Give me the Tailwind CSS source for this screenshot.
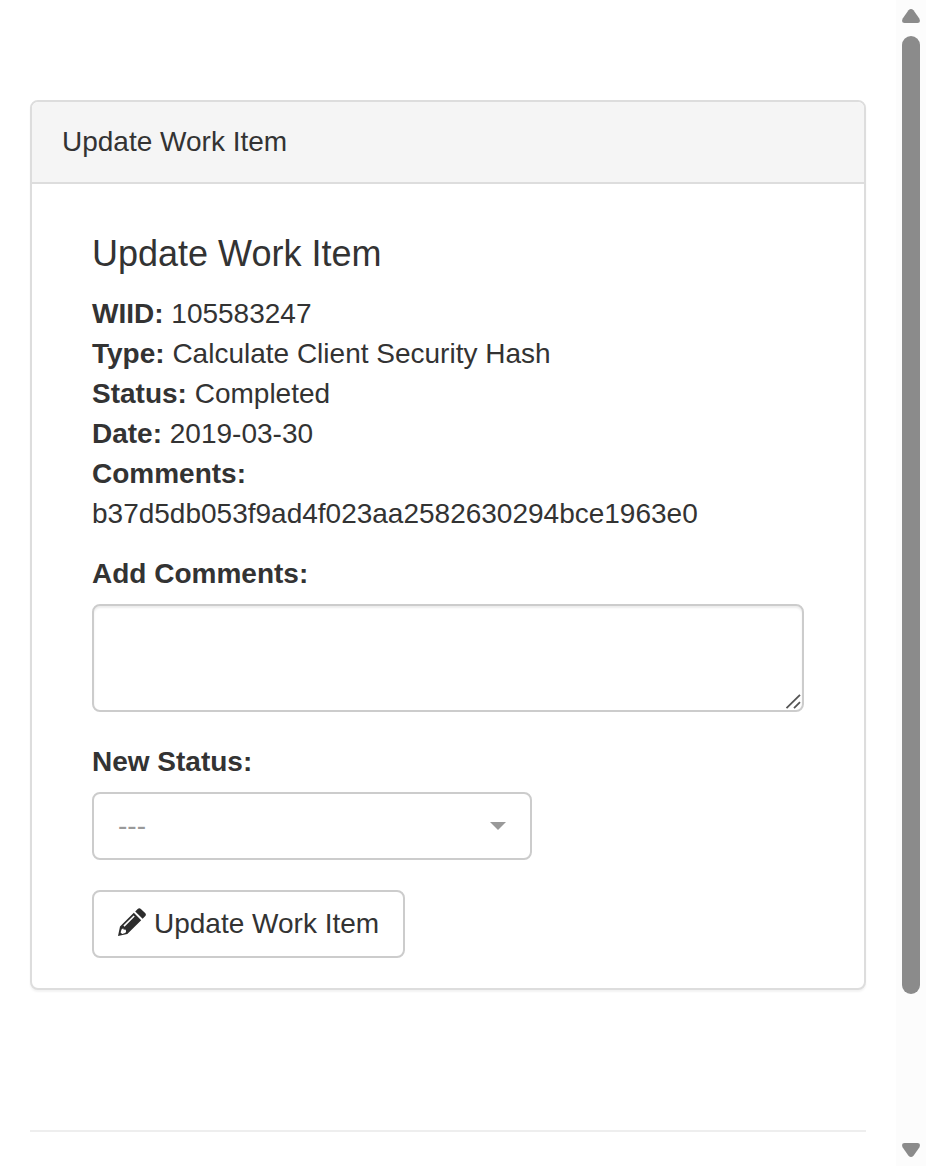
<!DOCTYPE html>
<html lang="en">
<head>
<meta charset="utf-8">
<title>Update Work Item</title>
<script src="https://cdn.jsdelivr.net/npm/@tailwindcss/browser@4"></script>
</head>
<body class="flex h-[1166px] w-[926px] overflow-hidden bg-white font-['Liberation_Sans',Arial,sans-serif] text-[28px] leading-10 text-[#333]">
  <main class="w-[896px] pl-[30px] pr-[30px] pt-[100px]">
    <section class="h-[890px] rounded-lg border-2 border-[#ddd] bg-white shadow-[0_2px_2px_rgba(0,0,0,0.05)]">
      <header class="h-[82px] rounded-t-md border-b-2 border-[#ddd] bg-[#f5f5f5] px-[30px] py-5">Update Work Item</header>
      <div class="px-[60px] pt-[50px]">
        <h1 class="text-[36px] leading-10">Update Work Item</h1>
        <div class="mt-5">
          <p><b>WIID:</b> 105583247</p>
          <p><b>Type:</b> Calculate Client Security Hash</p>
          <p><b>Status:</b> Completed</p>
          <p><b>Date:</b> 2019-03-30</p>
          <p><b>Comments:</b></p>
          <p>b37d5db053f9ad4f023aa2582630294bce1963e0</p>
        </div>
        <label class="mt-5 block font-bold">Add Comments:</label>
        <div class="mt-2.5 flex h-[108px] w-[712px] items-end justify-end rounded-lg border-2 border-[#ccc] bg-white shadow-[inset_0_2px_2px_rgba(0,0,0,0.075)]">
          <svg class="mr-px mb-px size-[16px]" viewBox="0 0 16 16" fill="none" stroke="#555" stroke-width="1.8"><path d="M1.5 15.2 15 1.8M9 15.2l6-6"/></svg>
        </div>
        <label class="mt-[30px] block font-bold">New Status:</label>
        <div class="mt-2.5 flex h-[68px] w-[440px] items-center justify-between rounded-lg border-2 border-[#ccc] pl-6 pr-6 text-[#999]">
          <span>---</span>
          <svg class="h-2 w-4" viewBox="0 0 16 8" fill="#999"><path d="M0 0h16L8 8z"/></svg>
        </div>
        <button class="mt-[30px] flex h-[68px] w-[313px] items-center rounded-lg border-2 border-[#ccc] bg-white pl-6">
          <svg class="mb-1 mr-2 size-7 shrink-0" viewBox="0 0 28 28" fill="#2d2d2d"><path fill-rule="evenodd" d="M15.800 4.800 23.200 12.200 9.300 26 0 28 2 18.600zM15.600 7.400 5.400 17.600l1.100 1.100L16.700 8.500zM3.500 21.400l-.9 3 1.500 1.500 3-.9 1-1-.3-2.200-2.300-.3-.3-1.300z"/><path d="m17.200 3.400 2.500-2.500q1.600-1.500 3.200 0l4.200 4.200q1.600 1.600 0 3.200l-2.500 2.500z"/></svg>
          <span>Update Work Item</span>
        </button>
      </div>
    </section>
    <hr class="mt-[140px] border-t-2 border-[#eee]">
  </main>
  <aside class="flex w-[30px] flex-col items-center bg-[#fcfcfc] pt-[9px]">
    <svg class="h-[14px] w-[18px] shrink-0" viewBox="0 0 18 14" fill="#8b8b8b"><path d="M6.500 1.300Q9-1.300 11.500 1.300L17.300 9.500Q19.200 14 15.500 14h-13Q-1.200 14 .7 9.500z"/></svg>
    <div class="mt-[13px] h-[958px] w-[18px] shrink-0 rounded-full bg-[#8b8b8b]"></div>
    <svg class="mt-[149px] h-[14px] w-[18px] shrink-0" viewBox="0 0 18 14" fill="#8b8b8b"><path d="M6.500 12.700Q9 15.300 11.500 12.700L17.300 4.500Q19.200 0 15.500 0h-13Q-1.200 0 .7 4.500z"/></svg>
  </aside>
</body>
</html>
